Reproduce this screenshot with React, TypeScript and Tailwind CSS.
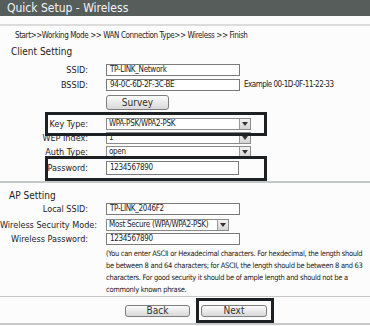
const font = { fontFamily: '"Liberation Sans Narrow", "DejaVu Sans Condensed", "Liberation Sans", sans-serif' };

function Field({ label, children, className = '' }: { label: string; children: React.ReactNode; className?: string }) {
  return (
    <div className={`flex items-center ${className}`}>
      <div className="w-[88px] shrink-0 whitespace-nowrap text-right text-[9px] leading-none text-[#222]">{label}</div>
      <div className="ml-[18px] flex items-center">{children}</div>
    </div>
  );
}

function TextBox({ value, w = 'w-[134px]', h = 'h-[12px]' }: { value: string; w?: string; h?: string }) {
  return (
    <div className={`${w} ${h} flex items-center border border-[#7a7a7a] bg-white px-[3px] text-[8px] leading-[10px] text-[#222] tracking-[-0.3px]`}>
      {value}
    </div>
  );
}

function SelectBox({ value, w = 'w-[145px]' }: { value: string; w?: string }) {
  return (
    <div className={`${w} h-[12px] flex border border-[#8a8a8a] bg-white`}>
      <div className="flex-1 px-[2px] text-[8px] leading-[10px] text-[#222] tracking-[-0.3px] overflow-hidden whitespace-nowrap">{value}</div>
      <div className="w-[11px] border-l border-[#9a9a9a] bg-gradient-to-b from-[#f2f2f2] to-[#d4d4d4] flex items-center justify-center">
        <span className="block w-0 h-0 border-l-[3px] border-r-[3px] border-t-[4px] border-l-transparent border-r-transparent border-t-[#333]" />
      </div>
    </div>
  );
}

function Btn({ label, w, h = 'h-[12px]' }: { label: string; w: string; h?: string }) {
  return (
    <div className={`${w} ${h} flex items-center justify-center rounded-[3px] border border-[#7e7e7e] bg-gradient-to-b from-[#fbfbfb] to-[#d8d8d8] text-[10px] leading-none text-[#333]`}>
      {label}
    </div>
  );
}

export default function App() {
  return (
    <div className="relative w-[370px] h-[326px] overflow-hidden bg-[#fcfcfc]" style={font}>
      <div className="h-[16px] bg-[#565d5b] pl-[7px] text-[12px] leading-[16px] text-[#f4f4f4]">Quick Setup - Wireless</div>
      <div className="h-[10px] border-b-2 border-[#dcdcdc]" />

      <div className="pl-[15px] pt-[5px] text-[8px] leading-[9px] text-[#222] tracking-[-0.4px]">
        Start&gt;&gt;Working Mode &gt;&gt; WAN Connection Type&gt;&gt; Wireless &gt;&gt; Finish
      </div>
      <div className="pl-[11px] pt-[6px] text-[10px] leading-[11px] text-[#222]">Client Setting</div>

      <div className="flex flex-col pt-[7px]">
        <Field label="SSID:"><TextBox value="TP-LINK_Network" /></Field>
        <Field label="BSSID:" className="mt-[3px]">
          <TextBox value="94-0C-6D-2F-3C-BE" />
          <span className="ml-[4px] text-[8px] text-[#222] tracking-[-0.5px]">Example 00-1D-0F-11-22-33</span>
        </Field>
        <Field label="" className="mt-[4px]"><Btn label="Survey" w="w-[63px]" h="h-[15px]" /></Field>
        <Field label="Key Type:" className="mt-[8px]"><SelectBox value="WPA-PSK/WPA2-PSK" /></Field>
        <Field label="WEP Index:" className="mt-[2px]"><SelectBox value="1" /></Field>
        <Field label="Auth Type:" className="mt-[2px]"><SelectBox value="open" /></Field>
        <Field label="Password:" className="mt-[3px]"><TextBox value="1234567890" w="w-[133px]" h="h-[14px]" /></Field>
      </div>

      <div className="mt-[6px] h-[2px] bg-[#c4c8c6]" />
      <div className="pl-[9px] pt-[7px] text-[10px] leading-[11px] text-[#222]">AP Setting</div>

      <div className="flex flex-col pt-[2px]">
        <Field label="Local SSID:"><TextBox value="TP-LINK_2046F2" /></Field>
        <Field label="Wireless Security Mode:" className="mt-[4px]"><SelectBox value="Most Secure (WPA/WPA2-PSK)" w="w-[123px]" /></Field>
        <Field label="Wireless Password:" className="mt-[2px]"><TextBox value="1234567890" /></Field>
        <div className="ml-[106px] mt-[3px] w-[262px] text-[7.5px] leading-[12px] text-[#222] tracking-[-0.3px]">
          (You can enter ASCII or Hexadecimal characters. For hexdecimal, the length should be between 8 and 64 characters; for ASCII, the length should be between 8 and 63 characters. For good security it should be of ample length and should not be a commonly known phrase.
        </div>
      </div>

      <div className="h-[1px] bg-[#c8c8c8]" />
      <div className="flex pl-[125px] pt-[8px] gap-[11px]">
        <Btn label="Back" w="w-[65px]" />
        <Btn label="Next" w="w-[66px]" />
      </div>
      <div className="mt-[6px] h-[2px] bg-[#c8c8c8]" />

      <div className="absolute left-[45px] top-[112px] w-[222px] h-[24px] border-[3px] border-[#1e2124]" />
      <div className="absolute left-[45px] top-[156px] w-[222px] h-[25px] border-[3px] border-[#1e2124]" />
      <div className="absolute left-[196px] top-[298px] w-[78px] h-[25px] border-[3px] border-[#1e2124]" />
    </div>
  );
}
